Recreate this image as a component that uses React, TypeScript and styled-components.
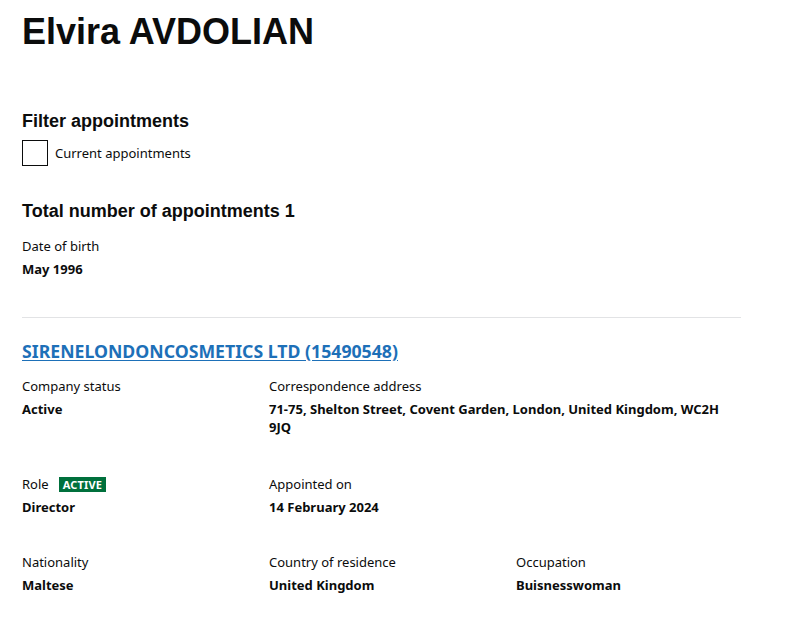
import styled, { createGlobalStyle } from "styled-components"

const Global = createGlobalStyle`
    body {
        margin: 0;
        background: #ffffff;
        color: #0b0c0c;
        font-family: "Noto Sans", "Liberation Sans", sans-serif;
    }
`

const Page = styled.main`
    width: 719px;
    padding: 0 22px;
`

const Title = styled.h1`
    font-family: "Liberation Sans", Arial, sans-serif;
    font-size: 36px;
    font-weight: 700;
    margin: 0;
    padding-top: 12px;
    line-height: 40px;
`

const SectionHeading = styled.h2<{top: number}>`
    font-family: "Liberation Sans", Arial, sans-serif;
    font-size: 18px;
    font-weight: 700;
    margin: ${props => props.top}px 0 0;
    line-height: 22px;
`

const CheckRow = styled.label`
    display: flex;
    align-items: center;
    gap: 7px;
    margin-top: 8px;
    font-size: 13px;
`

const Box = styled.span`
    width: 24px;
    height: 24px;
    border: 1px solid #0b0c0c;
    display: inline-block;
`

const Label = styled.div`
    font-size: 13px;
    line-height: 18px;
    display: flex;
    align-items: center;
    gap: 10px;
`

const Value = styled.div`
    font-size: 13px;
    font-weight: 700;
    line-height: 18px;
    margin-top: 5px;
`

const Item = styled.div<{top?: number}>`
    margin-top: ${props => props.top ?? 0}px;
`

const Rule = styled.hr`
    border: 0;
    border-top: 1px solid #e2e3e5;
    margin: 39px 0 0;
`

const CompanyLink = styled.a`
    display: block;
    margin-top: 22px;
    font-size: 17.7px;
    font-weight: 700;
    line-height: 22px;
    color: #1d70b8;
    text-decoration: underline;
    text-underline-offset: 2px;
`

const Grid = styled.div<{top: number}>`
    display: grid;
    grid-template-columns: 247px 247px 225px;
    margin-top: ${props => props.top}px;
`

const Tag = styled.span`
    background: #00703c;
    color: #ffffff;
    font-size: 11px;
    font-weight: 700;
    padding: 1px 4px;
    line-height: 13px;
    letter-spacing: 0.2px;
`

const App = () => {
    return <>
        <Global />
        <Page>
            <Title>Elvira AVDOLIAN</Title>
            <SectionHeading top={58}>Filter appointments</SectionHeading>
            <CheckRow><Box />Current appointments</CheckRow>
            <SectionHeading top={34}>Total number of appointments 1</SectionHeading>
            <Item top={15}>
                <Label>Date of birth</Label>
                <Value>May 1996</Value>
            </Item>
            <Rule />
            <CompanyLink href="#">SIRENELONDONCOSMETICS LTD (15490548)</CompanyLink>
            <Grid top={15}>
                <Item>
                    <Label>Company status</Label>
                    <Value>Active</Value>
                </Item>
                <Item style={{gridColumn: 'span 2'}}>
                    <Label>Correspondence address</Label>
                    <Value>71-75, Shelton Street, Covent Garden, London, United Kingdom, WC2H 9JQ</Value>
                </Item>
            </Grid>
            <Grid top={39}>
                <Item>
                    <Label>Role <Tag>ACTIVE</Tag></Label>
                    <Value>Director</Value>
                </Item>
                <Item>
                    <Label>Appointed on</Label>
                    <Value>14 February 2024</Value>
                </Item>
            </Grid>
            <Grid top={37}>
                <Item>
                    <Label>Nationality</Label>
                    <Value>Maltese</Value>
                </Item>
                <Item>
                    <Label>Country of residence</Label>
                    <Value>United Kingdom</Value>
                </Item>
                <Item>
                    <Label>Occupation</Label>
                    <Value>Buisnesswoman</Value>
                </Item>
            </Grid>
        </Page>
    </>
}

export default App
